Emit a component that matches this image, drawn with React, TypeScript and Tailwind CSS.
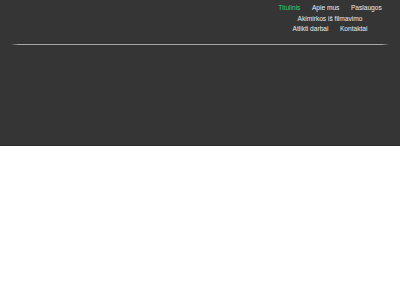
export default function App() {
  const links = [
    { label: 'Titulinis', active: true },
    { label: 'Apie mus' },
    { label: 'Paslaugos' },
    { label: 'Akimirkos iš filmavimo' },
    { label: 'Atlikti darbai' },
    { label: 'Kontaktai' },
  ];

  return (
    <div className="w-[400px] h-[300px] bg-white font-['Liberation_Sans',Arial,sans-serif]">
      <header className="h-[146px] bg-[#353535] border-b border-[#2c2c2c] px-[11px] pt-[3px]">
        <div className="flex justify-end pr-[1px]">
          <nav className="w-[116px] flex flex-wrap justify-center">
            {links.map((l) => (
              <a
                key={l.label}
                href="#"
                className={`px-[5.75px] text-[6.6px] leading-[10.5px] whitespace-nowrap ${
                  l.active ? 'text-[#36c77c]' : 'text-[#ececec]'
                }`}
              >
                {l.label}
              </a>
            ))}
          </nav>
        </div>
        {/* divider with faded ends */}
        <div className="mt-[9px] h-px [background-image:linear-gradient(to_right,#353535,#a5a5a5_2%,#a5a5a5_98%,#353535)]" />
      </header>
    </div>
  );
}
